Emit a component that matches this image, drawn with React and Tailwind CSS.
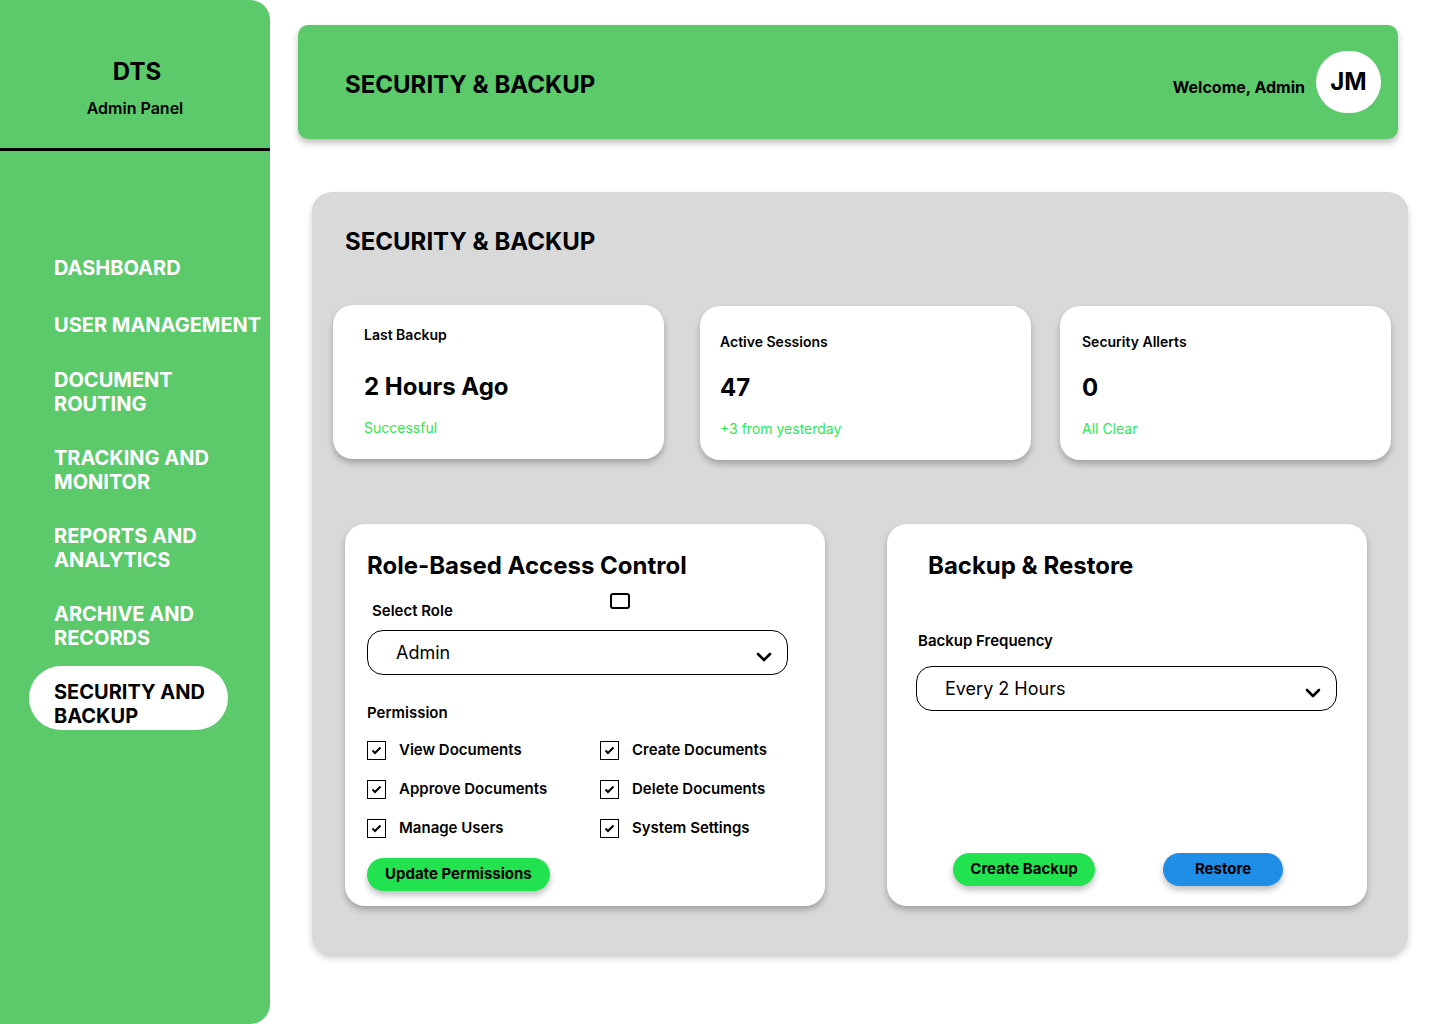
import { ChevronDown } from "lucide-react";

const navItems = [
  { lines: ["DASHBOARD"], mb: "mb-[33px]" },
  { lines: ["USER MANAGEMENT"], mb: "mb-[31px]" },
  { lines: ["DOCUMENT", "ROUTING"], mb: "mb-[30px]" },
  { lines: ["TRACKING AND", "MONITOR"], mb: "mb-[30px]" },
  { lines: ["REPORTS AND", "ANALYTICS"], mb: "mb-[30px]" },
  { lines: ["ARCHIVE AND", "RECORDS"], mb: "mb-[16px]" },
];

const stats = [
  { label: "Last Backup", value: "2 Hours Ago", sub: "Successful", box: "pt-[21px] pl-[31px]", vmt: "mt-[29px]" },
  { label: "Active Sessions", value: "47", sub: "+3 from yesterday", box: "pt-[27px] pl-[20px] mt-[1px]", vmt: "mt-[23px]" },
  { label: "Security Allerts", value: "0", sub: "All Clear", box: "pt-[27px] pl-[22px] mt-[1px] -ml-[7px]", vmt: "mt-[23px]" },
];

const permissions = [
  "View Documents",
  "Create Documents",
  "Approve Documents",
  "Delete Documents",
  "Manage Users",
  "System Settings",
];

const CheckBox = () => (
  <div className="w-[19px] h-[19px] border border-black bg-white flex items-center justify-center">
    <svg width="11" height="9" viewBox="0 0 11 9">
      <path d="M1.5 4.5 L4 7 L9.5 1.5" fill="none" stroke="black" strokeWidth="2" />
    </svg>
  </div>
);

const Select = ({ value }) => (
  <div className="h-[45px] w-[421px] border border-black rounded-[16px] flex items-center justify-between pl-[28px] pr-[11px]">
    <span className="text-[18px] text-black">{value}</span>
    <ChevronDown size={24} strokeWidth={2.6} className="mt-[8px] text-black" />
  </div>
);

const Sidebar = () => (
  <aside className="w-[270px] h-[1024px] shrink-0 bg-[#5cc96b] rounded-r-[20px] flex flex-col">
    <div className="h-[151px] flex flex-col items-center pt-[57px] border-b-[3px] border-black">
      <div className="text-[24px] font-bold leading-[29px] text-black pl-[4px]">DTS</div>
      <div className="text-[16px] font-semibold leading-[20px] mt-[12px] text-black">Admin Panel</div>
    </div>
    <nav className="flex flex-col pt-[105px]">
      {navItems.map((item, i) => (
        <div key={i} className={`pl-[54px] ${item.mb} text-white text-[20px] font-bold leading-[24px]`}>
          {item.lines.map((l) => (
            <div key={l}>{l}</div>
          ))}
        </div>
      ))}
      <div className="ml-[29px] w-[199px] h-[64px] bg-white rounded-full flex flex-col pt-[14px] pl-[25px] text-black text-[20px] font-bold leading-[24px]">
        <div>SECURITY AND</div>
        <div>BACKUP</div>
      </div>
    </nav>
  </aside>
);

export default function App() {
  return (
    <div className="w-[1440px] h-[1024px] bg-white flex font-['Inter',sans-serif] text-black overflow-hidden">
      <Sidebar />
      <main className="flex flex-col pl-[28px] pt-[25px]">
        <header className="w-[1100px] h-[114px] bg-[#5cc96b] rounded-[10px] shadow-[0_4px_6px_rgba(0,0,0,0.25)] flex items-center justify-between pl-[47px] pr-[17px]">
          <h1 className="text-[24px] font-bold leading-[29px] mt-[4px]">SECURITY &amp; BACKUP</h1>
          <div className="flex items-center gap-[11px]">
            <span className="text-[16px] font-bold mt-[9px]">Welcome, Admin</span>
            <div className="w-[65px] h-[62px] rounded-full bg-white flex items-center justify-center text-[24px] font-bold">
              JM
            </div>
          </div>
        </header>

        <section className="ml-[14px] mt-[53px] w-[1096px] h-[762px] bg-[#d9d9d9] rounded-[20px] shadow-[0_4px_6px_rgba(0,0,0,0.2)] flex flex-col">
          <h2 className="pl-[33px] pt-[35px] text-[24px] font-bold leading-[29px]">SECURITY &amp; BACKUP</h2>

          <div className="flex pl-[21px] mt-[49px] gap-[36px]">
            {stats.map((s) => (
              <div
                key={s.label}
                className={`w-[331px] h-[154px] bg-white rounded-[20px] shadow-[0_4px_6px_rgba(0,0,0,0.25)] ${s.box}`}
              >
                <div className="text-[14px] font-semibold leading-[17px]">{s.label}</div>
                <div className={`text-[24px] font-bold leading-[29px] ${s.vmt}`}>{s.value}</div>
                <div className="text-[14px] text-[#2ee84f] leading-[17px] mt-[18px]">{s.sub}</div>
              </div>
            ))}
          </div>

          <div className="flex pl-[33px] mt-[64px] gap-[62px]">
            <div className="w-[480px] h-[382px] bg-white rounded-[20px] shadow-[0_4px_6px_rgba(0,0,0,0.25)] pl-[22px] pt-[27px]">
              <h3 className="text-[24px] font-bold leading-[30px]">Role-Based Access Control</h3>
              <div className="flex items-start mt-[12px]">
                <span className="pl-[5px] mt-[9px] text-[15px] font-semibold leading-[18px]">Select Role</span>
                <div className="ml-[157px] w-[20px] h-[16px] border-2 border-black rounded-[3px]" />
              </div>
              <div className="mt-[10px]">
                <Select value="Admin" />
              </div>
              <div className="mt-[29px] text-[15px] font-semibold leading-[18px]">Permission</div>
              <div className="grid grid-cols-[233px_1fr] gap-y-[20px] mt-[19px]">
                {permissions.map((p) => (
                  <div key={p} className="flex items-center gap-[13px] h-[19px]">
                    <CheckBox />
                    <span className="text-[15px] font-semibold">{p}</span>
                  </div>
                ))}
              </div>
              <button className="mt-[20px] h-[33px] px-[18px] bg-[#22e34f] rounded-full text-[15px] font-bold shadow-[0_4px_6px_rgba(0,0,0,0.25)]">
                Update Permissions
              </button>
            </div>

            <div className="w-[480px] h-[382px] bg-white rounded-[20px] shadow-[0_4px_6px_rgba(0,0,0,0.25)] pl-[29px] pt-[27px] flex flex-col">
              <h3 className="pl-[12px] text-[24px] font-bold leading-[30px]">Backup &amp; Restore</h3>
              <div className="mt-[51px] pl-[2px] text-[15px] font-semibold leading-[18px]">Backup Frequency</div>
              <div className="mt-[16px]">
                <Select value="Every 2 Hours" />
              </div>
              <div className="flex mt-[142px] pl-[37px] gap-[68px]">
                <button className="h-[33px] w-[142px] bg-[#22e34f] rounded-full text-[15px] font-bold shadow-[0_4px_6px_rgba(0,0,0,0.25)]">
                  Create Backup
                </button>
                <button className="h-[33px] w-[120px] bg-[#1f8ee6] rounded-full text-[15px] font-bold shadow-[0_4px_6px_rgba(0,0,0,0.25)]">
                  Restore
                </button>
              </div>
            </div>
          </div>
        </section>
      </main>
    </div>
  );
}
